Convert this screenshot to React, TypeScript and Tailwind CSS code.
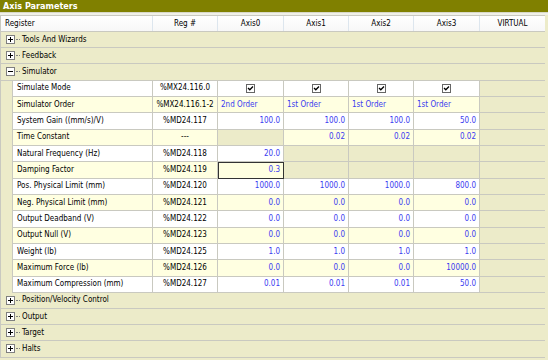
import React from 'react';

type Cell = { v?: string; kind?: 'num' | 'text' | 'check' | 'off' | 'sel' };
type SimRow = { name: string; reg: string; axes: Cell[] };

const n = (v: string): Cell => ({ v, kind: 'num' });
const off: Cell = { kind: 'off' };
const chk: Cell = { kind: 'check' };
const t = (v: string): Cell => ({ v, kind: 'text' });

const simRows: SimRow[] = [
  { name: 'Simulate Mode', reg: '%MX24.116.0', axes: [chk, chk, chk, chk] },
  { name: 'Simulator Order', reg: '%MX24.116.1-2', axes: [t('2nd Order'), t('1st Order'), t('1st Order'), t('1st Order')] },
  { name: 'System Gain ((mm/s)/V)', reg: '%MD24.117', axes: [n('100.0'), n('100.0'), n('100.0'), n('50.0')] },
  { name: 'Time Constant', reg: '---', axes: [off, n('0.02'), n('0.02'), n('0.02')] },
  { name: 'Natural Frequency (Hz)', reg: '%MD24.118', axes: [n('20.0'), off, off, off] },
  { name: 'Damping Factor', reg: '%MD24.119', axes: [{ v: '0.3', kind: 'sel' }, off, off, off] },
  { name: 'Pos. Physical Limit (mm)', reg: '%MD24.120', axes: [n('1000.0'), n('1000.0'), n('1000.0'), n('800.0')] },
  { name: 'Neg. Physical Limit (mm)', reg: '%MD24.121', axes: [n('0.0'), n('0.0'), n('0.0'), n('0.0')] },
  { name: 'Output Deadband (V)', reg: '%MD24.122', axes: [n('0.0'), n('0.0'), n('0.0'), n('0.0')] },
  { name: 'Output Null (V)', reg: '%MD24.123', axes: [n('0.0'), n('0.0'), n('0.0'), n('0.0')] },
  { name: 'Weight (lb)', reg: '%MD24.125', axes: [n('1.0'), n('1.0'), n('1.0'), n('1.0')] },
  { name: 'Maximum Force (lb)', reg: '%MD24.126', axes: [n('0.0'), n('0.0'), n('0.0'), n('10000.0')] },
  { name: 'Maximum Compression (mm)', reg: '%MD24.127', axes: [n('0.01'), n('0.01'), n('0.01'), n('50.0')] },
];

const axisW = ['w-[66px]', 'w-[65px]', 'w-[65px]', 'w-[66px]'];

function Toggle({ open }: { open?: boolean }) {
  return (
    <span className="flex items-center">
      <span className="relative h-[9px] w-[9px] border border-[#7f7f7f] bg-white">
        <span className="absolute left-[1px] top-[3px] h-px w-[5px] bg-black" />
        {!open && <span className="absolute left-[3px] top-[1px] h-[5px] w-px bg-black" />}
      </span>
      <span className="ml-px w-[4px] border-t border-dotted border-[#808080]" />
    </span>
  );
}

function GroupRow({ label, open }: { label: string; open?: boolean }) {
  return (
    <div className="flex h-[16.2px] items-center border-b border-[#c9c9c0] bg-[#ecebc9] pl-[5px]">
      <Toggle open={open} />
      <span className="ml-[2px] text-black">{label}</span>
    </div>
  );
}

function Check() {
  return (
    <span className="flex h-[9px] w-[9px] items-center justify-center border border-[#666] bg-white">
      <svg width="7" height="7" viewBox="0 0 7 7">
        <path d="M1 3 L2.8 4.8 L6 1.5" stroke="#000" strokeWidth="1.3" fill="none" />
      </svg>
    </span>
  );
}

function AxisCell({ c, bg, w }: { c: Cell; bg: string; w: string }) {
  if (c.kind === 'off') {
    return <div className={`${w} h-full shrink-0 border-r border-b border-[#c9c9c0] bg-[#ecebc9]`} />;
  }
  if (c.kind === 'check') {
    return (
      <div className={`${w} ${bg} flex h-full shrink-0 items-center justify-center border-r border-b border-[#c9c9c0]`}>
        <Check />
      </div>
    );
  }
  if (c.kind === 'text') {
    return (
      <div className={`${w} ${bg} flex h-full shrink-0 items-center border-r border-b border-[#c9c9c0] pl-[3px] text-[#3b3bf0]`}>
        {c.v}
      </div>
    );
  }
  if (c.kind === 'sel') {
    return (
      <div className={`${w} ${bg} flex h-full shrink-0 items-center justify-end border border-[#333] pr-[3px] text-[#3b3bf0]`}>
        {c.v}
      </div>
    );
  }
  return (
    <div className={`${w} ${bg} flex h-full shrink-0 items-center justify-end border-r border-b border-[#c9c9c0] pr-[3px] text-[#3b3bf0]`}>
      {c.v}
    </div>
  );
}

export default function App() {
  return (
    <div
      className="h-[360px] w-[548px] overflow-hidden whitespace-nowrap bg-[#ecebc9] text-[8px] leading-none"
      style={{ fontFamily: '"DejaVu Sans Condensed", "Liberation Sans", sans-serif' }}
    >
      {/* Title */}
      <div className="flex h-[12px] items-center bg-[#808000] pl-[3px] text-[9px] font-bold text-white">
        Axis Parameters
      </div>
      <div className="h-[3px] border-t border-[#d8d8c8] bg-[#f0f0e8]" />

      <div className="mr-[3px] border-l border-[#c9c9c0]">
        {/* Header */}
        <div className="flex h-[17px] border-y border-[#c9c9c0] bg-gradient-to-b from-white to-[#f7f7f7] text-black">
          <div className="flex w-[152px] shrink-0 items-center border-r border-[#dde6ee] pl-[4px]">Register</div>
          <div className="flex w-[65px] shrink-0 items-center justify-center border-r border-[#dde6ee]">Reg #</div>
          {['Axis0', 'Axis1', 'Axis2', 'Axis3'].map((a, i) => (
            <div key={a} className={`${axisW[i]} flex shrink-0 items-center justify-center border-r border-[#dde6ee]`}>
              {a}
            </div>
          ))}
          <div className="flex flex-1 items-center justify-center">VIRTUAL</div>
        </div>

        <GroupRow label="Tools And Wizards" />
        <GroupRow label="Feedback" />
        <GroupRow label="Simulator" open />

        {simRows.map((r, i) => {
          const bg = i % 2 === 0 ? 'bg-white' : 'bg-[#ffffe1]';
          return (
            <div key={r.name} className="flex h-[16.33px]">
              <div className="w-[12px] shrink-0 border-r border-[#c9c9c0] bg-[#ecebc9]" />
              <div className={`${bg} flex h-full w-[140px] shrink-0 items-center border-r border-b border-[#c9c9c0] pl-[4px] text-black`}>
                {r.name}
              </div>
              <div className={`${bg} flex h-full w-[65px] shrink-0 items-center justify-center border-r border-b border-[#c9c9c0] text-black`}>
                {r.reg}
              </div>
              {r.axes.map((c, j) => (
                <AxisCell key={j} c={c} bg={bg} w={axisW[j]} />
              ))}
              <div className="h-full flex-1 border-b border-[#c9c9c0] bg-[#ecebc9]" />
            </div>
          );
        })}

        <GroupRow label="Position/Velocity Control" />
        <GroupRow label="Output" />
        <GroupRow label="Target" />
        <GroupRow label="Halts" />
      </div>
    </div>
  );
}
